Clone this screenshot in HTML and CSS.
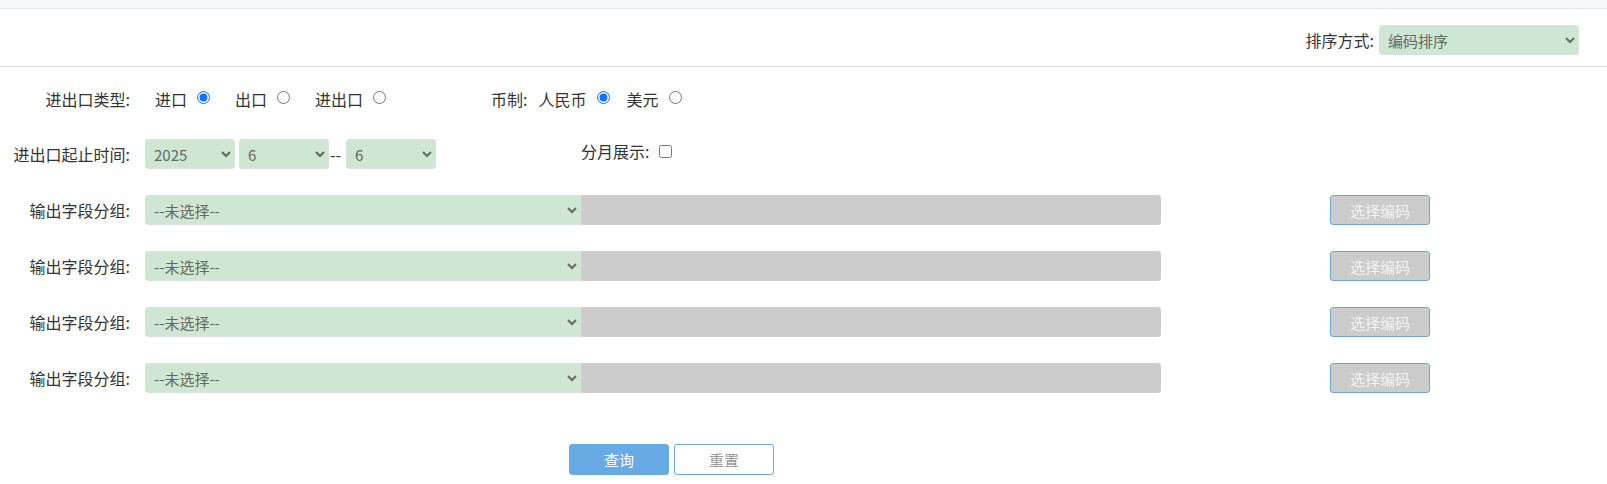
FILE: index.html
```html
<!DOCTYPE html>
<html lang="zh-CN">
<head>
<meta charset="utf-8">
<title>查询</title>
<link rel="stylesheet" href="styles.css">
</head>
<body>
<div class="topbar"></div>
<header class="toolbar">
  <label class="tb-label">排序方式:</label>
  <select class="sel sel-sort"><option>编码排序</option></select>
</header>
<form class="query">
  <div class="row row-type">
    <span class="lbl">进出口类型:</span>
    <div class="radios">
      <label class="opt">进口<input type="radio" name="t" checked></label>
      <label class="opt">出口<input type="radio" name="t"></label>
      <label class="opt">进出口<input type="radio" name="t"></label>
    </div>
    <div class="currency">
      <span class="cur-lbl">币制:</span>
      <label class="opt">人民币<input type="radio" name="c" checked></label>
      <label class="opt">美元<input type="radio" name="c"></label>
    </div>
  </div>
  <div class="row row-time">
    <span class="lbl">进出口起止时间:</span>
    <select class="sel sel-small"><option>2025</option></select>
    <select class="sel sel-small sel-gap"><option>6</option></select>
    <span class="dash">--</span>
    <select class="sel sel-small"><option>6</option></select>
    <label class="monthly">分月展示:<input type="checkbox"></label>
  </div>
  <div class="row row-field">
    <span class="lbl">输出字段分组:</span>
    <select class="sel sel-field"><option>--未选择--</option></select>
    <input class="codes" type="text" disabled>
    <button type="button" class="btn-code">选择编码</button>
  </div>
  <div class="row row-field">
    <span class="lbl">输出字段分组:</span>
    <select class="sel sel-field"><option>--未选择--</option></select>
    <input class="codes" type="text" disabled>
    <button type="button" class="btn-code">选择编码</button>
  </div>
  <div class="row row-field">
    <span class="lbl">输出字段分组:</span>
    <select class="sel sel-field"><option>--未选择--</option></select>
    <input class="codes" type="text" disabled>
    <button type="button" class="btn-code">选择编码</button>
  </div>
  <div class="row row-field">
    <span class="lbl">输出字段分组:</span>
    <select class="sel sel-field"><option>--未选择--</option></select>
    <input class="codes" type="text" disabled>
    <button type="button" class="btn-code">选择编码</button>
  </div>
  <div class="actions">
    <button type="button" class="btn-query">查询</button>
    <button type="button" class="btn-reset">重置</button>
  </div>
</form>
</body>
</html>
```
FILE: styles.css
```css
* { box-sizing: border-box; }
body {
  margin: 0;
  font-family: "Noto Sans CJK SC", "Noto Sans", sans-serif;
  font-size: 16px;
  color: #333;
  background: #fff;
}
.topbar {
  height: 9px;
  background: #f5f9fc;
  border-bottom: 1px solid #e6e8ea;
}
.toolbar {
  height: 58px;
  display: flex;
  justify-content: flex-end;
  align-items: flex-start;
  padding: 16px 28px 0 0;
  border-bottom: 1px solid #dcdcdc;
}
.tb-label { line-height: 30px; margin-right: 5px; }
.sel {
  height: 30px;
  font-family: inherit;
  font-size: 15px;
  color: #666;
  background-color: #cee7d2;
  border: 1px solid #d6e4d8;
  border-radius: 3px;
  padding: 0 4px;
  outline: none;
}
.sel-sort { width: 200px; }
.row {
  display: flex;
  align-items: center;
  height: 30px;
}
.lbl {
  width: 130px;
  text-align: right;
  flex: none;
}
.row-type { margin-top: 17px; }
.radios { display: flex; margin-left: 25px; gap: 25px; }
.opt { display: flex; align-items: center; white-space: nowrap; }
.opt input { margin: 0 0 3px 10px; width: 13px; height: 13px; }
.currency { display: flex; align-items: center; margin-left: 105px; gap: 11px; }
.currency .opt + .opt { margin-left: 6px; }
.row-time { margin-top: 25px; }
.row-time .lbl + .sel { margin-left: 15px; }
.sel-small { width: 90px; }
.sel-gap { margin-left: 4px; }
.dash { margin: 0 5px 0 1px; color: #333; }
.monthly { display: flex; align-items: center; margin-left: 145px; margin-bottom: 6px; }
.monthly input { margin: 0 0 0 9px; width: 13px; height: 13px; }
.row-field { margin-top: 26px; }
.sel-field { width: 436px; margin-left: 15px; border-radius: 3px 0 0 3px; }
.codes {
  width: 580px;
  height: 30px;
  background: #cccccc;
  border: 1px solid #cccccc;
  border-radius: 0 3px 3px 0;
}
.btn-code {
  margin-left: 169px;
  width: 100px;
  height: 30px;
  background: #cccccc;
  color: #f3f3f3;
  border: 1px solid #6ba7de;
  border-radius: 3px;
  font-family: inherit;
  font-size: 15px;
  padding: 0;
}
.actions {
  display: flex;
  gap: 5px;
  margin-top: 51px;
  padding-left: 569px;
}
.btn-query, .btn-reset {
  width: 100px;
  height: 31px;
  border-radius: 3px;
  font-family: inherit;
  font-size: 15px;
  padding: 0;
}
.btn-query { background: #68abe4; border: 1px solid #68abe4; color: #fff; }
.btn-reset { background: #fff; border: 1px solid #68abe4; color: #999; }
```
